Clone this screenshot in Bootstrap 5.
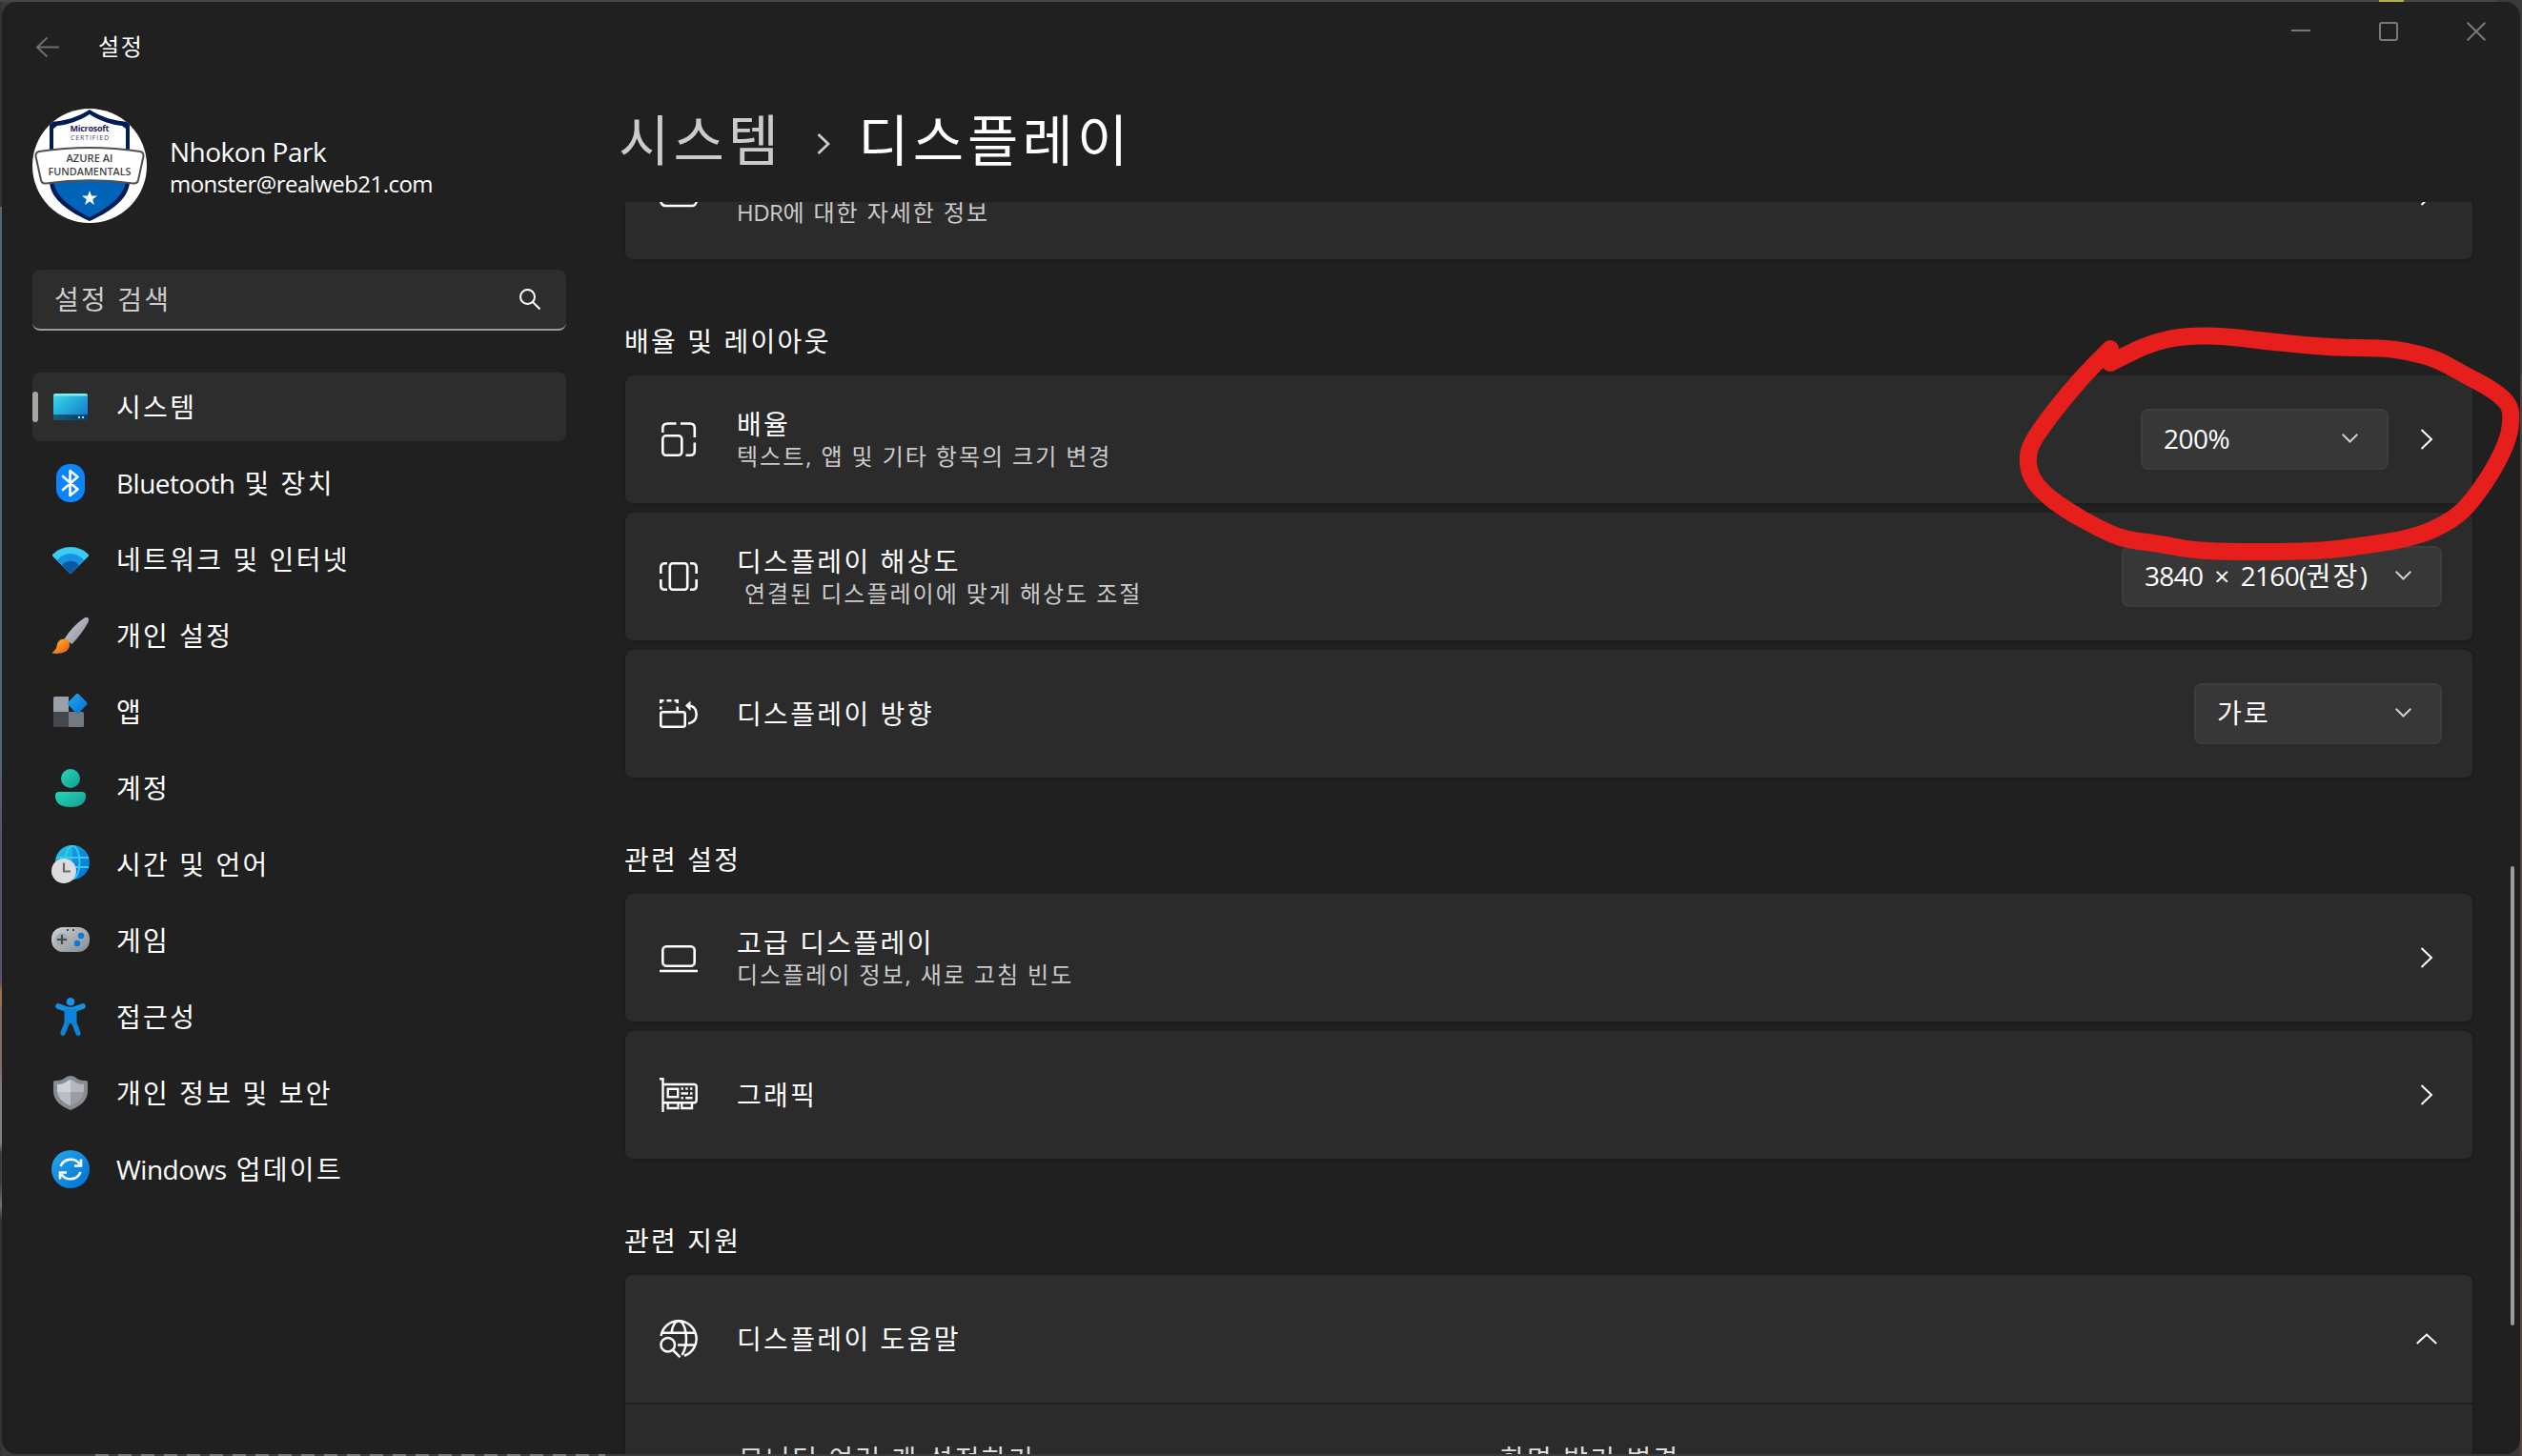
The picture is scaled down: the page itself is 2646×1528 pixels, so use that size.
<!DOCTYPE html>
<html lang="ko">
<head>
    <meta charset="UTF-8">
    <meta name="viewport" content="width=device-width, initial-scale=1.0">
    <title>설정</title>
    <link href="https://cdn.jsdelivr.net/npm/bootstrap@5.3.0/dist/css/bootstrap.min.css" rel="stylesheet">
    <style>
        body {
            width: 2646px;
            height: 1528px;
            margin: 0;
            padding: 2px;
            overflow: hidden;
            font-family: "Open Sans", "Noto Sans CJK KR", sans-serif;
            font-size: 28px;
            line-height: 34px;
            color: #fff;
            /* thin slices of the desktop that show around the window */
            background:
                linear-gradient(#b4b048, #b4b048) 2496px 0 / 26px 2px no-repeat,
                linear-gradient(#464646, #464646) 0 0 / 2620px 2px no-repeat,
                repeating-linear-gradient(90deg, #7a7a7a 0 14px, #3a3a3a 14px 24px) 100px 1526px / 535px 2px no-repeat,
                linear-gradient(#343434 0 217px, #56657a 217px 800px, #5b5078 880px 1030px, #a87440 1042px, #856c66 1060px 1120px, #7c8480 1150px 1200px, #3c4042 1210px 1240px, #6d7478 1265px, #343434 1280px) 0 0 / 2px 100% no-repeat,
                linear-gradient(#3a3a3a 0 394px, #544040 394px 1100px, #604438 1528px) 2644px 0 / 2px 100% no-repeat,
                #3a3a3a;
        }

        svg { flex: none; display: block; }

        .app-window {
            height: 1524px;
            background: #202020;
            border-radius: 15px;
            overflow: hidden;
        }

        .title-bar { height: 96px; padding: 20px 36px 0 36px; }
        .app-title { margin-left: 41px; font-size: 24px; letter-spacing: 0.07em; padding-top: 10px; }
        .back-arrow { margin-top: 17px; }
        .window-controls { gap: 72px; padding-top: 1px; }

        /* sidebar */
        .side-pane { width: 592px; padding: 16px 0 0 32px; flex: none; }
        .profile-text { margin-left: 24px; padding-top: 2px; }
        .profile-name { font-size: 28px; line-height: 36px; letter-spacing: -0.5px; }
        .profile-mail { font-size: 24px; line-height: 32px; letter-spacing: -0.55px; }
        .search-box {
            height: 64px;
            margin-top: 49px;
            padding: 0 27px 0 23px;
            background: #2d2d2d;
            border-radius: 8px;
            border-bottom: 2px solid #9a9a9a;
            color: #cbcbcb;
        }
        .side-nav { margin-top: 44px; gap: 8px; }
        .side-item {
            height: 72px;
            padding-left: 20px;
            gap: 28px;
            border-radius: 8px;
            position: relative;
            color: #fff;
        }
        .side-item.selected { background: #2d2d2d; }
        .side-item.selected::before {
            content: "";
            position: absolute;
            left: 0;
            top: 20px;
            width: 6px;
            height: 32px;
            border-radius: 3px;
            background: #a8a6a0;
        }
        .ko { letter-spacing: 0.084em; word-spacing: 0.4px; }
        .ko .en { letter-spacing: -0.5px; }

        /* main pane */
        .main-pane { padding-left: 60px; min-width: 0; }
        .crumbs { height: 114px; font-size: 58px; line-height: 97px; letter-spacing: 0.07em; margin-left: -5px; }
        .crumbs .parent { color: #cbcbcb; }
        .crumbs svg { margin: 42px 29px 0 36px; }
        .scroll-area { height: 1314px; overflow: hidden; }
        .scroll-body { margin-top: -76px; width: 1942px; }
        .setting-row {
            height: 138px;
            margin-bottom: 6px;
            padding: 0 32px 0 36px;
            border: 2px solid #1d1d1d;
            border-radius: 9px;
            background: #2b2b2b;
            background-clip: padding-box;
        }
        .setting-row .texts { margin-left: 41px; padding-top: 2px; }
        .setting-row .sub { font-size: 24px; line-height: 34px; color: #cbcbcb; white-space: pre; letter-spacing: 0.083em; word-spacing: -0.2px; }
        .setting-row.open { background: #2d2d2d; border-radius: 9px 9px 0 0; margin-bottom: 0; }
        .setting-row.below { border-top: 0; border-radius: 0; padding: 40px 0 0 119px; color: #dedede; }
        .setting-row.below .topic { width: 799px; }
        .group-title { line-height: 36px; padding-left: 1px; margin-top: 66px; margin-bottom: 16px; }
        .pick {
            width: 260px;
            height: 64px;
            padding: 0 30px 2px 22px;
            background: #373737;
            border: 2px solid #3d3d3d;
            border-radius: 8px;
        }
        .pick.wide { width: 336px; }
        .pick.wide .en { letter-spacing: -0.7px; word-spacing: 5.5px; }
        .go { margin-left: 33px; margin-right: 9px; }
        .fold { margin-right: 5px; }

        .scroll-thumb { position: absolute; left: 2634px; top: 909px; width: 4px; height: 482px; border-radius: 2px; background: #9b9b9b; }
        .ink { position: absolute; left: 0; top: 0; pointer-events: none; }
    </style>
</head>
<body>
    <div class="app-window d-flex flex-column">
        <header class="title-bar d-flex align-items-start">
            <svg class="back-arrow" width="24" height="22" viewBox="0 0 24 22" fill="none" stroke="#6e6e6e" stroke-width="2"><path d="M24 10.500H1M11.500 .5L1 10.500L11.500 20.500"/></svg>
            <div class="app-title">설정</div>
            <div class="window-controls d-flex ms-auto">
                <svg width="20" height="20" viewBox="0 0 20 20"><path d="M0 9H20" stroke="#797979" stroke-width="2"/></svg>
                <svg width="20" height="20" viewBox="0 0 20 20"><rect x="1" y="1" width="18" height="18" rx="2" fill="none" stroke="#797979" stroke-width="2"/></svg>
                <svg width="20" height="20" viewBox="0 0 20 20"><path d="M.7 .7L19.300 19.300M19.300 .7L.7 19.300" stroke="#797979" stroke-width="2"/></svg>
            </div>
        </header>

        <div class="d-flex flex-grow-1">
            <aside class="side-pane">
                <div class="d-flex align-items-center">
                    <svg width="120" height="120" viewBox="0 0 120 120">
                        <defs><clipPath id="round"><circle cx="60" cy="60" r="60"/></clipPath></defs>
                        <g clip-path="url(#round)">
                            <rect width="120" height="120" fill="#fff"/>
                            <path d="M60 1C48 9 34 13 18 14V76C18 96 42 110 60 118C78 110 102 96 102 76V14C86 13 72 9 60 1Z" fill="#001b55"/>
                            <path d="M60 6C49 13 37 17 26 18L22 21V76H98V21L94 18C83 17 71 13 60 6Z" fill="#fff"/>
                            <path d="M22 74H98C98 92 76 106 60 114C44 106 22 92 22 74Z" fill="#0065b8"/>
                            <path d="M7 45Q60 37 113 45Q117 46 116.500 50L111 75Q110 79 106 78.500Q60 72 14 78.500Q10 79 9 75L3.500 50Q3 46 7 45Z" fill="#fff" stroke="#505050" stroke-width="2"/>
                            <g text-anchor="middle" font-family="Open Sans, sans-serif">
                                <text x="60" y="24" font-size="9" font-weight="700" fill="#2a1b5c" textLength="41">Microsoft</text>
                                <text x="60" y="33" font-size="7" fill="#4b4470" textLength="40">CERTIFIED</text>
                                <text x="60" y="56" font-size="11.500" font-weight="600" fill="#444" textLength="49" lengthAdjust="spacingAndGlyphs">AZURE AI</text>
                                <text x="60" y="69.500" font-size="11.500" font-weight="600" fill="#444" textLength="87" lengthAdjust="spacingAndGlyphs">FUNDAMENTALS</text>
                            </g>
                            <path d="M60 86L62 91.500H68L63.200 95.200L65 101L60 97.500L55 101L56.800 95.200L52 91.500H58Z" fill="#fff"/>
                        </g>
                    </svg>
                    <div class="profile-text">
                        <div class="profile-name">Nhokon Park</div>
                        <div class="profile-mail">monster@realweb21.com</div>
                    </div>
                </div>

                <div class="search-box d-flex align-items-center justify-content-between ko">
                    <span>설정 검색</span>
                    <svg width="22" height="22" viewBox="0 0 22 22" fill="none" stroke="#fff" stroke-width="2"><circle cx="8.500" cy="8.500" r="7.500"/><path d="M14 14L21.500 21.500"/></svg>
                </div>

                <nav class="side-nav d-flex flex-column ko">
                    <div class="side-item selected d-flex align-items-center">
                        <svg width="40" height="40" viewBox="0 0 40 40">
                            <defs>
                                <linearGradient id="gSys" x1="0" y1="0" x2="1" y2="1"><stop offset="0" stop-color="#3be0e8"/><stop offset="1" stop-color="#0a6fcb"/></linearGradient>
                                <linearGradient id="gBar" x1="0" y1="0" x2="1" y2="0"><stop offset="0" stop-color="#12606f"/><stop offset="1" stop-color="#063c6c"/></linearGradient>
                                <linearGradient id="gTeal" x1="0" y1="0" x2="1" y2="1"><stop offset="0" stop-color="#2bd4bd"/><stop offset="1" stop-color="#0f9f8c"/></linearGradient>
                                <linearGradient id="gBlue" x1="0" y1="0" x2="1" y2="1"><stop offset="0" stop-color="#26a8ea"/><stop offset="1" stop-color="#006fd6"/></linearGradient>
                                <linearGradient id="gGrey" x1="0" y1="0" x2="1" y2="1"><stop offset="0" stop-color="#cdd2d8"/><stop offset="1" stop-color="#868b92"/></linearGradient>
                                <linearGradient id="gFlame" x1="0" y1="0" x2="1" y2="1"><stop offset="0" stop-color="#ffc124"/><stop offset="1" stop-color="#e8501a"/></linearGradient>
                            </defs>
                            <rect x="2" y="6" width="36" height="28" rx="3" fill="url(#gSys)"/>
                            <path d="M2 8.500V8Q2 6 4.500 6H35.500Q38 6 38 8V8.500Z" fill="#7eeef2"/>
                            <path d="M2 28H38V31Q38 34 35 34H5Q2 34 2 31Z" fill="url(#gBar)"/>
                            <path d="M28 30h2v2h-2zM32 30h2v2h-2z" fill="#b9d4e6"/>
                        </svg>
                        <span>시스템</span>
                    </div>
                    <div class="side-item d-flex align-items-center">
                        <svg width="40" height="40" viewBox="0 0 40 40"><rect x="5" width="30" height="40" rx="14" fill="#0a84ff"/><path d="M12 13L27.500 26.500L19.500 33V7L27.500 13.500L12 27" fill="none" stroke="#fff" stroke-width="2.600" stroke-linejoin="round" stroke-linecap="round"/></svg>
                        <span><span class="en">Bluetooth</span> 및 장치</span>
                    </div>
                    <div class="side-item d-flex align-items-center">
                        <svg width="40" height="40" viewBox="0 0 40 40"><path d="M20 34.700Q19 34.700 18 33.500L1 16.500Q.6 15.500 1.500 14.500Q9 7 20 7Q31 7 38.500 14.500Q39.400 15.500 39 16.500L22 33.500Q21 34.700 20 34.700Z" fill="#3ccbf4"/><path d="M18 33.500L6 20.800Q12 14 20 14Q28 14 34 20.800L22 33.500Q20 35.600 18 33.500Z" fill="#1593e4"/><path d="M18 33.500L11 26Q14.500 21.700 20 21.700Q25.500 21.700 29 26L22 33.500Q20 35.600 18 33.500Z" fill="#0a58a4"/></svg>
                        <span>네트워크 및 인터넷</span>
                    </div>
                    <div class="side-item d-flex align-items-center">
                        <svg width="40" height="40" viewBox="0 0 40 40"><path d="M34.500 1.500Q37 0 38.500 1.500Q39.800 3 38.500 6Q32 18 21.500 29L13.500 23.500Q23 9 34.500 1.500Z" fill="url(#gGrey)"/><path d="M11.500 23.800Q16 22.500 18.500 27Q20.500 32 15.500 36.500Q9.500 40 1 38.500Q0.500 37.500 3.500 35.500Q5.500 33.500 6 29Q7.500 24.500 11.500 23.800Z" fill="url(#gFlame)"/></svg>
                        <span>개인 설정</span>
                    </div>
                    <div class="side-item d-flex align-items-center">
                        <svg width="40" height="40" viewBox="0 0 40 40"><path d="M3.500 4H18V20H2V5.500Q2 4 3.500 4Z" fill="#98a0a9"/><path d="M2 20H18V36H3.500Q2 36 2 34.500Z" fill="#44484c"/><path d="M18 20H32.500Q34 20 34 21.500V34.500Q34 36 32.500 36H18Z" fill="#727981"/><path d="M25.800 1.500Q27.200 .2 28.600 1.500L37 10Q38.200 11.300 37 12.600L28.600 21.300Q27.200 22.600 25.800 21.300L17.300 12.600Q16.200 11.300 17.300 10Z" fill="url(#gBlue)"/></svg>
                        <span>앱</span>
                    </div>
                    <div class="side-item d-flex align-items-center">
                        <svg width="40" height="40" viewBox="0 0 40 40" fill="url(#gTeal)"><circle cx="20" cy="10" r="10"/><path d="M8 24H32Q36 24 36 28Q36 40 20 40Q4 40 4 28Q4 24 8 24Z"/></svg>
                        <span>계정</span>
                    </div>
                    <div class="side-item d-flex align-items-center">
                        <svg width="40" height="40" viewBox="0 0 40 40"><circle cx="22" cy="18" r="18" fill="url(#gBlue)"/><path d="M22 0A18 18 0 0 0 4 18H22Z" fill="#25c8dd" opacity=".6"/><g fill="none" stroke="#2fd0ee" stroke-width="1.800"><ellipse cx="22" cy="18" rx="7.500" ry="17.500"/><path d="M6 13H39M6 23H39"/></g><circle cx="13" cy="27" r="13" fill="#dcdcdc"/><path d="M13 18.500V27.500H20" fill="none" stroke="#6a6a6a" stroke-width="2.200"/></svg>
                        <span>시간 및 언어</span>
                    </div>
                    <div class="side-item d-flex align-items-center">
                        <svg width="40" height="40" viewBox="0 0 40 40"><rect y="6" width="40" height="26" rx="12" fill="url(#gGrey)"/><circle cx="11" cy="19" r="7" fill="#a5aab1"/><path d="M11 14V24M6 19H16" stroke="#45494e" stroke-width="2.200"/><circle cx="31" cy="15" r="3.200" fill="#0a78d8"/><circle cx="27" cy="23" r="3.200" fill="#0a78d8"/><path d="M16 8h2v2h-2zM22 8h2v2h-2z" fill="#45494e"/></svg>
                        <span>게임</span>
                    </div>
                    <div class="side-item d-flex align-items-center">
                        <svg width="40" height="40" viewBox="0 0 40 40"><circle cx="20" cy="4.300" r="4.300" fill="#1b93e2"/><path d="M7 9L17 12.500H23L33 9" fill="none" stroke="#1590e0" stroke-width="5.600" stroke-linecap="round" stroke-linejoin="round"/><path d="M13.500 12H26.500V26L30.500 36.500Q31 39 29 39.800Q26.500 40.300 25.500 38L21.300 27.500Q20 26 18.700 27.500L14.500 38Q13.500 40.300 11 39.800Q9 39 9.500 36.500L13.500 26Z" fill="#0b84dc"/></svg>
                        <span>접근성</span>
                    </div>
                    <div class="side-item d-flex align-items-center">
                        <svg width="40" height="40" viewBox="0 0 40 40"><path d="M20 2Q24 2 27 5Q30 7 36 7Q38 7 38 9V18Q38 31 20 38Q2 31 2 18V9Q2 7 4 7Q10 7 13 5Q16 2 20 2Z" fill="#878c93"/><path d="M20 6Q17 6.500 14.500 9Q11.500 11 6 11V19H20Z" fill="#ced2d7"/><path d="M20 6Q23 6.500 25.500 9Q28.500 11 34 11V19H20Z" fill="#b3b8be"/><path d="M6 19H20V33.500Q7 28 6 19Z" fill="#b9bdc3"/><path d="M34 19H20V33.500Q33 28 34 19Z" fill="#989da4"/></svg>
                        <span>개인 정보 및 보안</span>
                    </div>
                    <div class="side-item d-flex align-items-center">
                        <svg width="40" height="40" viewBox="0 0 40 40"><circle cx="20" cy="20" r="20" fill="url(#gBlue)"/><g fill="none" stroke="#fff" stroke-width="2.600"><path d="M9.500 17A11.500 11.500 0 0 1 29.500 14.500M31 9.500V16.500H24M30.500 23A11.500 11.500 0 0 1 10.500 25.500M9 30.500V23.500H16"/></g></svg>
                        <span><span class="en">Windows</span> 업데이트</span>
                    </div>
                </nav>
            </aside>

            <main class="main-pane flex-grow-1">
                <div class="crumbs d-flex align-items-start">
                    <span class="parent">시스템</span>
                    <svg width="14" height="22" viewBox="0 0 14 22" fill="none" stroke="#cbcbcb" stroke-width="2.800"><path d="M1.500 1L12 11L1.500 21"/></svg>
                    <span>디스플레이</span>
                </div>
                <div class="scroll-area">
                    <div class="scroll-body ko">
                        <div class="setting-row d-flex align-items-center">
                            <svg width="40" height="40" viewBox="0 0 40 40" fill="none" stroke="#fff" stroke-width="2.600"><rect x="1.300" y="5" width="37.400" height="26" rx="5"/></svg>
                            <div class="texts">
                                <div>&nbsp;</div>
                                <div class="sub"><span class="en">HDR</span>에 대한 자세한 정보</div>
                            </div>
                            <svg class="ms-auto go" width="14" height="22" viewBox="0 0 14 22" fill="none" stroke="#fff" stroke-width="2"><path d="M1.500 1L12 11L1.500 21"/></svg>
                        </div>

                        <div class="group-title">배율 및 레이아웃</div>
                        <div class="setting-row d-flex align-items-center">
                            <svg width="40" height="40" viewBox="0 0 40 40" fill="none" stroke="#fff" stroke-width="2.600"><rect x="3.300" y="16.300" width="20" height="20.500" rx="3.500"/><path d="M3.300 13V8.500Q3.300 3.500 8.300 3.500H17.500M22 3.500H32Q36.800 3.500 36.800 8.500V18M36.800 23.500V32Q36.800 36.800 32 36.800H27.500"/></svg>
                            <div class="texts">
                                <div>배율</div>
                                <div class="sub">텍스트, 앱 및 기타 항목의 크기 변경</div>
                            </div>
                            <div class="pick d-flex align-items-center justify-content-between ms-auto">
                                <span class="en">200%</span>
                                <svg width="17" height="10" viewBox="0 0 17 10" fill="none" stroke="#cfcfcf" stroke-width="2"><path d="M.7 .8L8.500 8.500L16.300 .8"/></svg>
                            </div>
                            <svg class="go" width="14" height="22" viewBox="0 0 14 22" fill="none" stroke="#fff" stroke-width="2"><path d="M1.500 1L12 11L1.500 21"/></svg>
                        </div>
                        <div class="setting-row d-flex align-items-center">
                            <svg width="40" height="40" viewBox="0 0 40 40" fill="none" stroke="#fff" stroke-width="2.600"><rect x="10.800" y="6.300" width="18.400" height="27.400" rx="3"/><path d="M1.300 17V10.500Q1.300 6.300 5.500 6.300H8M1.300 23V29.500Q1.300 33.700 5.500 33.700H8M38.700 17V10.500Q38.700 6.300 34.500 6.300H32M38.700 23V29.500Q38.700 33.700 34.500 33.700H32"/></svg>
                            <div class="texts">
                                <div>디스플레이 해상도</div>
                                <div class="sub"> 연결된 디스플레이에 맞게 해상도 조절</div>
                            </div>
                            <div class="pick wide d-flex align-items-center justify-content-between ms-auto">
                                <span><span class="en">3840 × 2160(</span>권장<span class="en">)</span></span>
                                <svg width="17" height="10" viewBox="0 0 17 10" fill="none" stroke="#cfcfcf" stroke-width="2"><path d="M.7 .8L8.500 8.500L16.300 .8"/></svg>
                            </div>
                        </div>
                        <div class="setting-row d-flex align-items-center">
                            <svg width="40" height="40" viewBox="0 0 40 40" fill="none" stroke="#fff" stroke-width="2.600"><rect x="1.300" y="18.300" width="25.400" height="15.400" rx="2"/><path d="M1.300 15.500V12.500M1.300 9V6.300H4.500M7.500 6.300H12.500M15.500 6.300H18.700V9M18.700 12.500V18"/><path d="M30 30.500Q38.700 28.500 38.700 20.500Q38.700 12.500 31 11.500"/><path d="M27 11.500L32.500 6.500V17Z" fill="#fff" stroke="none"/></svg>
                            <div class="texts pt-0">디스플레이 방향</div>
                            <div class="pick d-flex align-items-center justify-content-between ms-auto">
                                <span>가로</span>
                                <svg width="17" height="10" viewBox="0 0 17 10" fill="none" stroke="#cfcfcf" stroke-width="2"><path d="M.7 .8L8.500 8.500L16.300 .8"/></svg>
                            </div>
                        </div>

                        <div class="group-title">관련 설정</div>
                        <div class="setting-row d-flex align-items-center">
                            <svg width="40" height="40" viewBox="0 0 40 40" fill="none" stroke="#fff" stroke-width="2.600"><rect x="3.300" y="8.300" width="33.400" height="20.400" rx="4"/><path d="M0 34H40"/></svg>
                            <div class="texts">
                                <div>고급 디스플레이</div>
                                <div class="sub">디스플레이 정보, 새로 고침 빈도</div>
                            </div>
                            <svg class="ms-auto go" width="14" height="22" viewBox="0 0 14 22" fill="none" stroke="#fff" stroke-width="2"><path d="M1.500 1L12 11L1.500 21"/></svg>
                        </div>
                        <div class="setting-row d-flex align-items-center">
                            <svg width="40" height="40" viewBox="0 0 40 40" fill="none" stroke="#fff" stroke-width="2.400"><path d="M0 3.200H3.500V38M3.500 9H36Q38.700 9 38.700 11.500V25.500Q38.700 28.300 36 28.300H3.500M8.700 28.300V34H19.500V28.300M23.300 28.300V34H34V28.300"/><rect x="8.700" y="13.800" width="10.500" height="8.400"/><path d="M22.500 13.500h2.500M27.200 13.500h2.500M32 13.500h2.500M22.500 18.500h7.500M32 18.500h2.500M22.500 23.200h2.500M27.200 23.200h7.300"/></svg>
                            <div class="texts pt-0">그래픽</div>
                            <svg class="ms-auto go" width="14" height="22" viewBox="0 0 14 22" fill="none" stroke="#fff" stroke-width="2"><path d="M1.500 1L12 11L1.500 21"/></svg>
                        </div>

                        <div class="group-title">관련 지원</div>
                        <div class="setting-row open d-flex align-items-center">
                            <svg width="40" height="40" viewBox="0 0 40 40" fill="none" stroke="#fff" stroke-width="2.500"><path d="M1.500 17A18.700 18.700 0 1 1 26 37.700M2.500 13.700H37.500M19 26.500H37.500M12.500 13.700Q14.500 1.300 20 1.300Q25.500 1.300 27.500 13.700Q29.500 28 23.500 37"/><circle cx="8.700" cy="26.200" r="7.300"/><path d="M13.700 31.500L21.500 39.300"/></svg>
                            <div class="texts pt-0">디스플레이 도움말</div>
                            <svg class="fold ms-auto" width="22" height="12" viewBox="0 0 22 12" fill="none" stroke="#fff" stroke-width="2"><path d="M.8 11L11 1.500L21.200 11"/></svg>
                        </div>
                        <div class="setting-row below d-flex align-items-start">
                            <span class="topic">모니터 여러 개 설정하기</span>
                            <span>화면 밝기 변경</span>
                        </div>
                    </div>
                </div>
            </main>
        </div>
    </div>

    <div class="scroll-thumb"></div>
    <svg class="ink" width="2646" height="1528" viewBox="0 0 2646 1528"><path id="marker" fill="none" stroke="#e61e1c" stroke-width="18" stroke-linecap="round" stroke-linejoin="round"/></svg>

    <script>
        // red marker stroke around the scale setting
        const points = [
            [2214, 381], [2233, 371], [2260, 359], [2289, 353], [2329, 352], [2376, 358], [2448, 365],
            [2499, 365], [2528, 369], [2557, 377], [2585, 393], [2614, 408], [2632, 423], [2635, 437],
            [2632, 460], [2618, 490], [2596, 523], [2575, 545], [2535, 564], [2477, 573], [2437, 578],
            [2390, 579], [2336, 579], [2297, 577], [2268, 571], [2228, 566], [2203, 555], [2167, 535],
            [2141, 515], [2129, 497], [2127, 477], [2134, 460], [2156, 430], [2185, 395], [2214, 366]
        ];
        let d = `M${points[0]}`;
        for (let i = 1; i < points.length - 1; i++) {
            const [x, y] = points[i];
            const [nx, ny] = points[i + 1];
            d += ` Q${x} ${y} ${(x + nx) / 2} ${(y + ny) / 2}`;
        }
        d += ` L${points[points.length - 1]}`;
        document.getElementById('marker').setAttribute('d', d);
    </script>
    <script src="https://cdn.jsdelivr.net/npm/bootstrap@5.3.0/dist/js/bootstrap.bundle.min.js"></script>
</body>
</html>
